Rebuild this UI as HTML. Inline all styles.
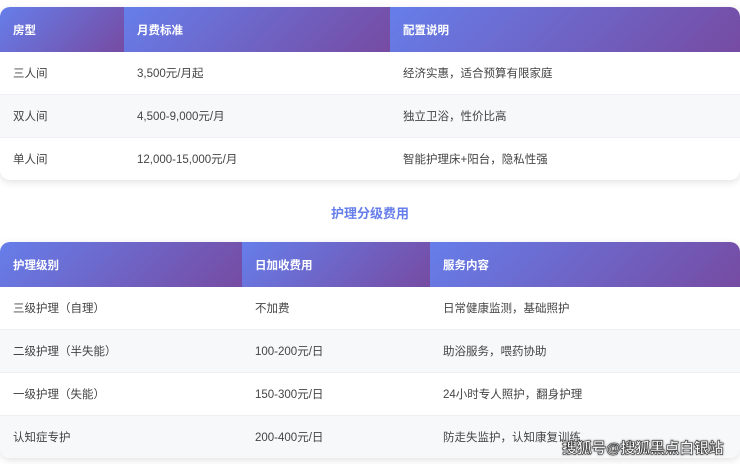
<!DOCTYPE html><html><head><meta charset="utf-8"><style>
body{margin:0;width:740px;height:464px;background:#fff;font-family:"Liberation Sans","Noto Sans CJK SC",sans-serif;position:relative;overflow:hidden}
.card{position:absolute;left:0;width:740px;border-radius:10px;overflow:hidden;box-shadow:0 2px 8px rgba(0,0,0,.12);background:#fff}
.row{display:flex;height:42px;align-items:center;font-size:11.5px;color:#444;border-bottom:1px solid #eef0f3}
.row.alt{background:#f7f8fa}
.hd{display:flex;height:45px}
.hd div{background:linear-gradient(135deg,#667eea,#764ba2);color:#fff;font-weight:bold;font-size:11.5px;display:flex;align-items:center;padding-left:13px;box-sizing:border-box}
.row div{padding-left:13px;box-sizing:border-box}
.t{position:absolute;top:203px;width:740px;text-align:center;color:#667eea;font-weight:bold;font-size:13px}
.wm{position:absolute;left:562px;top:437px;font-size:15px;letter-spacing:-0.3px;font-weight:bold;color:#fff;-webkit-text-stroke:.6px #333;text-shadow:0 0 2px #333}
</style></head><body>
<div class="card" style="top:7px">
<div class="hd"><div style="width:124px">房型</div><div style="width:266px">月费标准</div><div style="width:350px">配置说明</div></div>
<div class="row"><div style="width:124px">三人间</div><div style="width:266px">3,500元/月起</div><div>经济实惠，适合预算有限家庭</div></div>
<div class="row alt"><div style="width:124px">双人间</div><div style="width:266px">4,500-9,000元/月</div><div>独立卫浴，性价比高</div></div>
<div class="row" style="border:0"><div style="width:124px">单人间</div><div style="width:266px">12,000-15,000元/月</div><div>智能护理床+阳台，隐私性强</div></div>
</div>
<div class="t">护理分级费用</div>
<div class="card" style="top:242px">
<div class="hd"><div style="width:242px">护理级别</div><div style="width:188px">日加收费用</div><div style="width:310px">服务内容</div></div>
<div class="row"><div style="width:242px">三级护理（自理）</div><div style="width:188px">不加费</div><div>日常健康监测，基础照护</div></div>
<div class="row alt"><div style="width:242px">二级护理（半失能）</div><div style="width:188px">100-200元/日</div><div>助浴服务，喂药协助</div></div>
<div class="row"><div style="width:242px">一级护理（失能）</div><div style="width:188px">150-300元/日</div><div>24小时专人照护，翻身护理</div></div>
<div class="row alt" style="border:0"><div style="width:242px">认知症专护</div><div style="width:188px">200-400元/日</div><div>防走失监护，认知康复训练</div></div>
</div>
<div class="wm">搜狐号@搜狐黑点白银站</div>
</body></html>
